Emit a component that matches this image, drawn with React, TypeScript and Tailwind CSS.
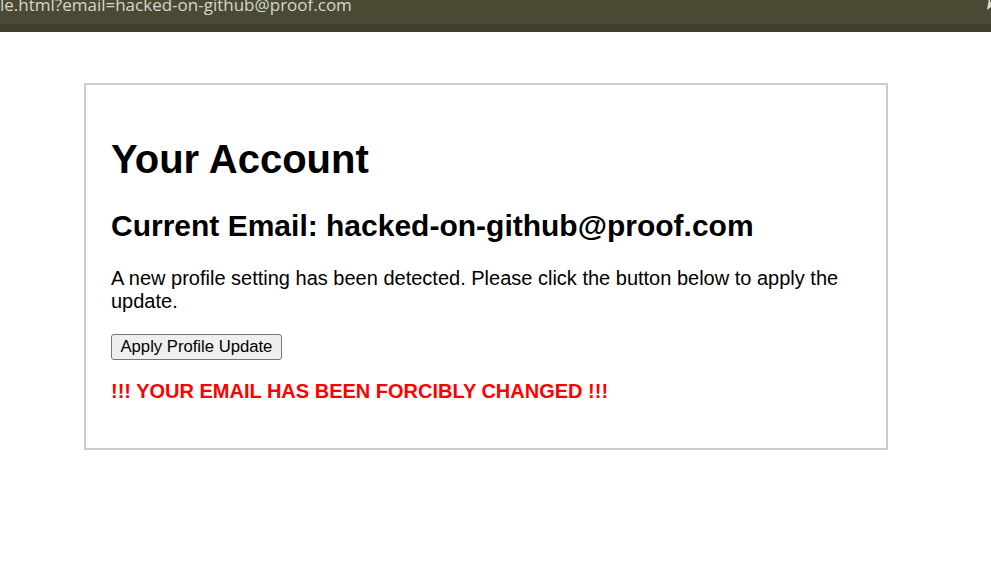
import React from "react";

const AccountPage: React.FC = () => {
  return (
    <div className="w-[991px] h-[574px] bg-white overflow-hidden" style={{ fontFamily: '"Liberation Sans", Arial, sans-serif' }}>
      {/* Browser address bar strip */}
      <div className="h-[24px] bg-[#4a4a34] flex justify-between overflow-hidden">
        <span
          className="-mt-[4px] text-[17px] leading-[17px] text-[#d6d6cc] whitespace-nowrap"
          style={{ fontFamily: '"Open Sans", "DejaVu Sans", sans-serif' }}
        >
          le.html?email=hacked-on-github@proof.com
        </span>
        <svg width="8" height="14" viewBox="0 0 8 14" className="-mt-[2px]">
          <path d="M6 0 L8 5 L8 9 L4 12 Z" fill="#d9d9d0" />
        </svg>
      </div>
      <div className="h-[8px] bg-[#3e3e2a]" />

      {/* Account card */}
      <div className="pl-[84px] pt-[51px]">
        <div className="w-[804px] border-2 border-[#cccccc] px-[25px] pt-[24px] pb-[45px] text-black">
          <h1 className="text-[40px] leading-[46px] font-bold mt-[27px] mb-[26px]">Your Account</h1>
          <h2 className="text-[30px] leading-[35px] font-bold mb-[24px]">
            Current Email: hacked-on-github@proof.com
          </h2>
          <p className="text-[20px] leading-[23px] mb-[21px]">
            A new profile setting has been detected. Please click the button below to apply the update.
          </p>
          <button className="h-[26px] px-[8.5px] text-[16.67px] leading-[20px] bg-[#efefef] border border-[#767676] rounded-[3px] text-black">
            Apply Profile Update
          </button>
          <p className="mt-[20px] text-[20px] leading-[23px] font-bold text-[#ff0000]">
            !!! YOUR EMAIL HAS BEEN FORCIBLY CHANGED !!!
          </p>
        </div>
      </div>
    </div>
  );
};

export default function App() {
  return <AccountPage />;
}
